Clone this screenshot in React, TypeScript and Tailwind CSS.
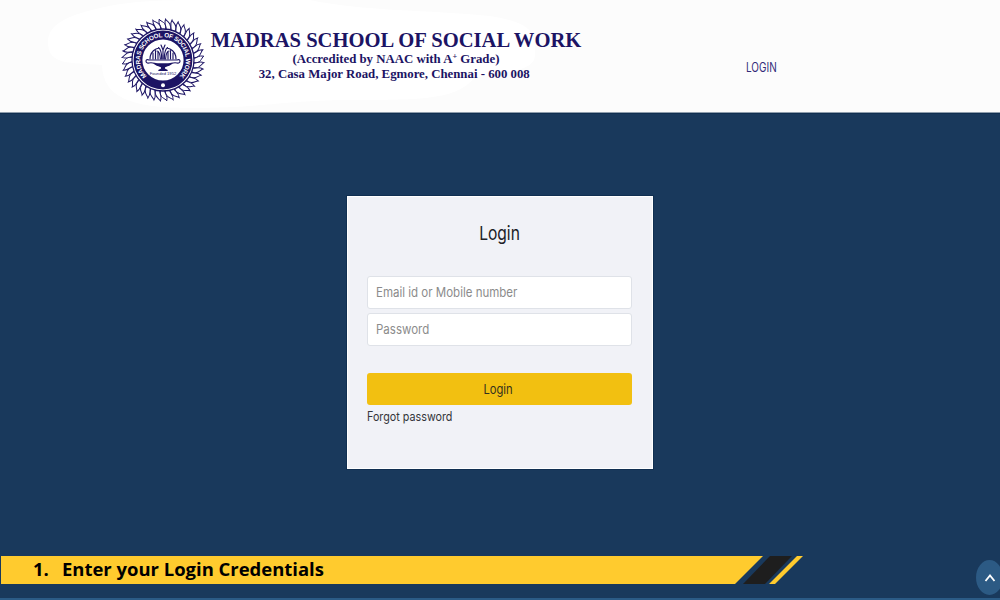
const TEETH = Array.from({ length: 40 }, (_, i) => (i * 360) / 40);

function Emblem() {
  return (
    <svg viewBox="-42 -42 84 84" className="h-[84px] w-[84px] shrink-0" fill="none" stroke="#1c1464">
      <g strokeWidth="1">
        {TEETH.map((angle) => (
          <path key={angle} transform={`rotate(${angle})`} d="M-1.6-31C-2-34-5-36-3.8-40.8C-2.2-38.2 3.8-38 2.6-31" fill="#fff" />
        ))}
      </g>
      <circle r="31" fill="#fff" strokeWidth="1.3" />
      <circle r="25" fill="#fff" strokeWidth="8.8" />
      <defs>
        <path id="emblem-arc" d="M-16.2 16.2A22.9 22.9 0 1 1 16.2 16.2" />
      </defs>
      <text fill="#fff" stroke="none" fontFamily="Liberation Sans, sans-serif" fontWeight="700" fontSize="6.3">
        <textPath href="#emblem-arc" textLength="107" lengthAdjust="spacing">MADRAS SCHOOL OF SOCIAL WORK</textPath>
      </text>
      <circle cy="25.2" r="2" fill="#fff" stroke="none" />
      <g strokeWidth="1.15" strokeLinecap="round">
        <path d="M0-1V-11M-1.3-1C-1.3-7-2.5-11-4.5-12.5M1.3-1C1.3-7 2.5-11 4.5-12.5M-2.6-1C-3-6-4.5-9-6-9M2.6-1C3-6 4.5-9 6-9M0-10L-2-15M0-10L2-15M-4-12L-7-11C-11-9-13-5-13-1M4-12L7-11C11-9 13-5 13-1M-5-8V-1M-7.5-9.5V-1M-10-7V-1M5-8V-1M7.5-9.5V-1M10-7V-1" />
        <path d="M-14 0H14M-14 0C-18-2-18 4-14 3C-10 2-8 4-5 4H5C8 4 10 2 14 3C18 4 18-2 14 0" />
        <path d="M-8 4H8C5 6 3 6 1.5 7V9L4.5 10.5H-4.5L-1.5 9V7C-3 6-5 6-8 4Z" fill="#1c1464" />
      </g>
      <text y="14.8" textAnchor="middle" fill="#1c1464" stroke="none" fontFamily="Liberation Sans, sans-serif" fontSize="4.1">Founded 1952</text>
    </svg>
  );
}

function Header() {
  return (
    <header className="relative flex h-[113px] shrink-0 border-b border-[#8f9ead] bg-[#fcfcfc] text-[#1c1464]">
      <svg className="absolute inset-0" width="660" height="112" aria-hidden="true">
        <path fill="#fff" d="M48 42C48 25 65 16 100 8Q130 0 190 0H310C360 11 430 10 490 16C530 23 536 30 535 55C535 70 510 72 475 77C455 103 410 99 340 100C270 102 260 108 190 108C130 108 103 97 102 65C70 62 48 66 48 42Z" />
      </svg>
      <div className="relative ml-[120.5px] mt-[18px]">
        <Emblem />
      </div>
      <div className="relative ml-[6.5px] mt-[28px] flex w-[370px] flex-col items-center whitespace-nowrap font-['Liberation_Serif',serif] font-bold">
        <h1 className="text-[20.6px] leading-[24px]">MADRAS SCHOOL OF SOCIAL WORK</h1>
        <p className="scale-x-[1.025] text-[12.5px] leading-[15px]">
          (Accredited by NAAC with A<span className="relative -top-[4px] text-[8px] leading-none">+</span> Grade)
        </p>
        <p className="ml-[-3px] scale-x-[1.025] text-[12.5px] leading-[15px]">32, Casa Major Road, Egmore, Chennai - 600 008</p>
      </div>
      <a className="relative ml-[165px] mt-[59px] h-[18px] origin-left scale-x-[0.8] text-[12.5px] leading-[18px] text-[#332b79] font-['Inter',sans-serif]">LOGIN</a>
    </header>
  );
}

function Field({ label }: { label: string }) {
  return (
    <div className="flex h-[33px] items-center rounded-[3px] border border-[#dfe2e8] bg-white px-[8px]">
      <span className="origin-left scale-x-[0.885] whitespace-nowrap text-[13px] text-[#8b8b8b]">{label}</span>
    </div>
  );
}

export default function App() {
  return (
    <div className="relative flex h-[600px] w-[1000px] flex-col overflow-hidden border-b-2 border-[#2b5b86] bg-[#19395c] font-['Inter',sans-serif]">
      <Header />
      <main className="flex h-[442px] shrink-0 justify-center border-t border-[#102f51] pt-[82px]">
        <section className="flex h-[273px] w-[306px] flex-col border border-white bg-[#f1f2f7] pl-[19px] pr-[20px] shadow-[0_0_0_1px_#102f51]">
          <h2 className="mt-[23px] h-[28px] scale-x-[0.82] text-center text-[19px] leading-[28px] text-[#202126]">Login</h2>
          <div className="mt-[28px] flex flex-col gap-[4px]">
            <Field label="Email id or Mobile number" />
            <Field label="Password" />
          </div>
          <button className="mt-[27px] flex h-[32px] shrink-0 items-center justify-center rounded-[3px] bg-[#f2c011] pt-px text-[13px] text-[#33301f]">
            <span className="-ml-[3px] scale-x-[0.86]">Login</span>
          </button>
          <a className="mt-[3px] origin-left scale-x-[0.86] whitespace-nowrap text-[12.5px] leading-[18px] text-[#34353a]">Forgot password</a>
        </section>
      </main>
      <div className="mt-px flex h-[28px] shrink-0">
        <div className="ml-px flex h-[28px] w-[762px] items-center bg-[#ffcb2e] pb-[2px] pl-[32px] text-[18px] font-bold text-black font-['Open_Sans',sans-serif] [clip-path:polygon(0_0,100%_0,734px_100%,0_100%)]">
          <span className="w-[28.5px] shrink-0 origin-left scale-x-[1.025]">1.</span>
          <span className="origin-left scale-x-[1.025] whitespace-nowrap">Enter your Login Credentials</span>
        </div>
        <svg className="-ml-[21px] h-[28px] w-[62px]" viewBox="742 0 62 28">
          <path fill="#1e1e1e" d="M770 0H792L765 28H743Z" />
          <path fill="#ffcb2e" d="M797 0H803L775 28H769Z" />
        </svg>
      </div>
      <div className="absolute left-[976px] top-[560px] flex h-[35px] w-[27px] items-center justify-center rounded-[50%] bg-[#2c5a84]">
        <svg width="12" height="10" viewBox="0 0 12 10" fill="none" stroke="#fff" strokeWidth="1.8">
          <path d="M1.5 8L6 2.5L10.5 8" />
        </svg>
      </div>
    </div>
  );
}
